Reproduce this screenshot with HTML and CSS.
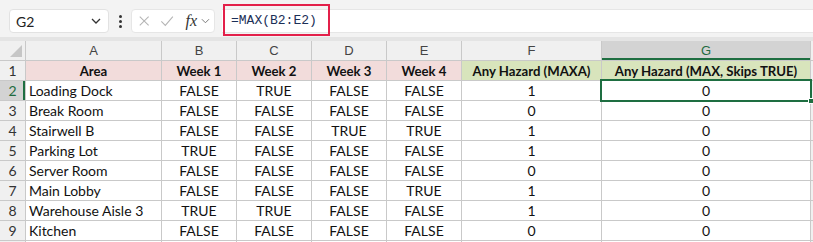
FILE: index.html
```html
<!DOCTYPE html>
<html>
<head>
<meta charset="utf-8">
<link rel="stylesheet" href="styles.css">
</head>
<body>
<div class="toolbar">
  <div class="namebox"><span>G2</span>
    <svg class="chev" width="10" height="6" viewBox="0 0 10 6"><path d="M1 1 L5 5 L9 1" fill="none" stroke="#333" stroke-width="1.3"/></svg>
  </div>
  <div class="dots"><i></i><i></i><i></i></div>
  <div class="fxbox">
    <svg width="14" height="14" viewBox="0 0 14 14"><path d="M2 2 L12 12 M12 2 L2 12" stroke="#b5b5b5" stroke-width="1.2" fill="none"/></svg>
    <svg width="16" height="14" viewBox="0 0 16 14"><path d="M1.5 7.5 L6 12 L14.5 2" stroke="#b5b5b5" stroke-width="1.2" fill="none"/></svg>
    <span class="fx">fx</span>
    <svg width="10" height="6" viewBox="0 0 10 6"><path d="M1 1 L5 5 L9 1" fill="none" stroke="#777" stroke-width="1.1"/></svg>
  </div>
  <div class="formula"><span class="ftext">=MAX(B2:E2)</span></div>
</div>
<div class="sheet">
  <div class="corner"><svg width="12" height="12" viewBox="0 0 12 12"><path d="M12 0 L12 12 L0 12 Z" fill="#c6c6c6"/></svg></div>
  <div class="ch">A</div><div class="ch">B</div><div class="ch">C</div><div class="ch">D</div><div class="ch">E</div><div class="ch">F</div><div class="ch sel">G</div><div class="ch blank"></div>

  <div class="rh">1</div>
  <div class="c hd pink">Area</div><div class="c hd pink">Week 1</div><div class="c hd pink">Week 2</div><div class="c hd pink">Week 3</div><div class="c hd pink">Week 4</div><div class="c hd green">Any Hazard (MAXA)</div><div class="c hd green">Any Hazard (MAX, Skips TRUE)</div><div class="c gray"></div>

  <div class="rh sel">2</div>
  <div class="c l">Loading Dock</div><div class="c">FALSE</div><div class="c">TRUE</div><div class="c">FALSE</div><div class="c">FALSE</div><div class="c">1</div><div class="c active">0<span class="handle"></span></div><div class="c gray"></div>

  <div class="rh">3</div>
  <div class="c l">Break Room</div><div class="c">FALSE</div><div class="c">FALSE</div><div class="c">FALSE</div><div class="c">FALSE</div><div class="c">0</div><div class="c">0</div><div class="c gray"></div>

  <div class="rh">4</div>
  <div class="c l">Stairwell B</div><div class="c">FALSE</div><div class="c">FALSE</div><div class="c">TRUE</div><div class="c">TRUE</div><div class="c">1</div><div class="c">0</div><div class="c gray"></div>

  <div class="rh">5</div>
  <div class="c l">Parking Lot</div><div class="c">TRUE</div><div class="c">FALSE</div><div class="c">FALSE</div><div class="c">FALSE</div><div class="c">1</div><div class="c">0</div><div class="c gray"></div>

  <div class="rh">6</div>
  <div class="c l">Server Room</div><div class="c">FALSE</div><div class="c">FALSE</div><div class="c">FALSE</div><div class="c">FALSE</div><div class="c">0</div><div class="c">0</div><div class="c gray"></div>

  <div class="rh">7</div>
  <div class="c l">Main Lobby</div><div class="c">FALSE</div><div class="c">FALSE</div><div class="c">FALSE</div><div class="c">TRUE</div><div class="c">1</div><div class="c">0</div><div class="c gray"></div>

  <div class="rh">8</div>
  <div class="c l">Warehouse Aisle 3</div><div class="c">TRUE</div><div class="c">TRUE</div><div class="c">FALSE</div><div class="c">FALSE</div><div class="c">1</div><div class="c">0</div><div class="c gray"></div>

  <div class="rh">9</div>
  <div class="c l">Kitchen</div><div class="c">FALSE</div><div class="c">FALSE</div><div class="c">FALSE</div><div class="c">FALSE</div><div class="c">0</div><div class="c">0</div><div class="c gray"></div>

  <div class="rh"></div>
  <div class="c"></div><div class="c"></div><div class="c"></div><div class="c"></div><div class="c"></div><div class="c"></div><div class="c"></div><div class="c gray"></div>
</div>
</body>
</html>
```
FILE: styles.css
```css
* { box-sizing: border-box; }
html, body { margin: 0; padding: 0; width: 813px; height: 242px; overflow: hidden; background: #fff; }
body { font-family: "Lato", "Open Sans", sans-serif; }

.toolbar {
  height: 41px;
  background: #f3f3f3;
  border-bottom: 4px solid #e4e4e4;
  display: flex;
  align-items: flex-start;
  padding-top: 9px;
  padding-left: 9px;
}
.namebox {
  width: 100px; height: 24px;
  background: #fff;
  border: 1px solid #e2e2e2;
  border-radius: 4px;
  display: flex; align-items: center; justify-content: space-between;
  padding: 0 7px 0 6px;
  font-size: 14px; color: #222;
}
.dots { width: 22px; height: 24px; display: flex; flex-direction: column; align-items: center; justify-content: center; gap: 2px; }
.dots i { display: block; width: 3px; height: 3px; background: #333; border-radius: 50%; }
.fxbox {
  width: 84px; height: 24px;
  background: #fff;
  border: 1px solid #e6e6e6;
  border-radius: 4px;
  display: flex; align-items: center; gap: 10px;
  padding: 0 4px 0 6px;
}
.fx { font-family: "Liberation Serif", serif; font-style: italic; font-size: 16px; color: #333; margin-left: 1px; margin-right: -6px; }
.formula {
  flex: 1; height: 24px; margin-left: 7px;
  background: #fff;
  border-top: 1px solid #e6e6e6; border-bottom: 1px solid #e6e6e6;
  position: relative;
}
.ftext {
  position: absolute; left: 1px; top: -6px;
  width: 107px; height: 32px;
  border: 2px solid #e3204a;
  font-family: "Liberation Mono", "DejaVu Sans Mono", monospace;
  font-size: 13px; color: #1b2f57;
  padding: 6px 0 0 6px;
  line-height: 17px;
}

.sheet {
  display: grid;
  grid-template-columns: 25px 135px 74px 74px 74px 74px 139px 208px 3px;
  grid-auto-rows: 19px;
  gap: 1px;
  background: #c9c9c9;
  height: 201px;
  overflow: hidden;
}
.corner { background: #f0f0f0; display: flex; align-items: flex-end; justify-content: flex-end; padding: 0 3px 3px 0; }
.ch {
  background: #f0f0f0; color: #444; font-size: 13px;
  display: flex; align-items: center; justify-content: center;
  font-family: "Liberation Sans", sans-serif;
}
.ch.sel { background: #d3d3d3; color: #1f6b3f; box-shadow: inset 0 -2px 0 #1e6e41; }
.ch.blank { background: #f0f0f0; }
.rh {
  background: #f0f0f0; color: #333; font-size: 14px;
  display: flex; align-items: center; justify-content: center;
}
.rh.sel { background: #d3d3d3; color: #1f6b3f; box-shadow: inset -2px 0 0 #1e6e41; }
.c {
  background: #fff; color: #111; font-size: 14px;
  display: flex; align-items: center; justify-content: center;
  white-space: nowrap; overflow: visible;
}
.c.l { justify-content: flex-start; padding-left: 3px; }
.c.hd { font-weight: 700; font-size: 13.2px; }
.c.pink { background: #f2dcdb; }
.c.green { background: #d8e4bc; }
.c.gray { background: #f0f0f0; }
.c.active { position: relative; outline: 2px solid #1e6e41; outline-offset: 0px; z-index: 2; }
.handle { position: absolute; right: -4px; bottom: -4px; width: 6px; height: 6px; background: #1e6e41; border: 1px solid #fff; }
```
